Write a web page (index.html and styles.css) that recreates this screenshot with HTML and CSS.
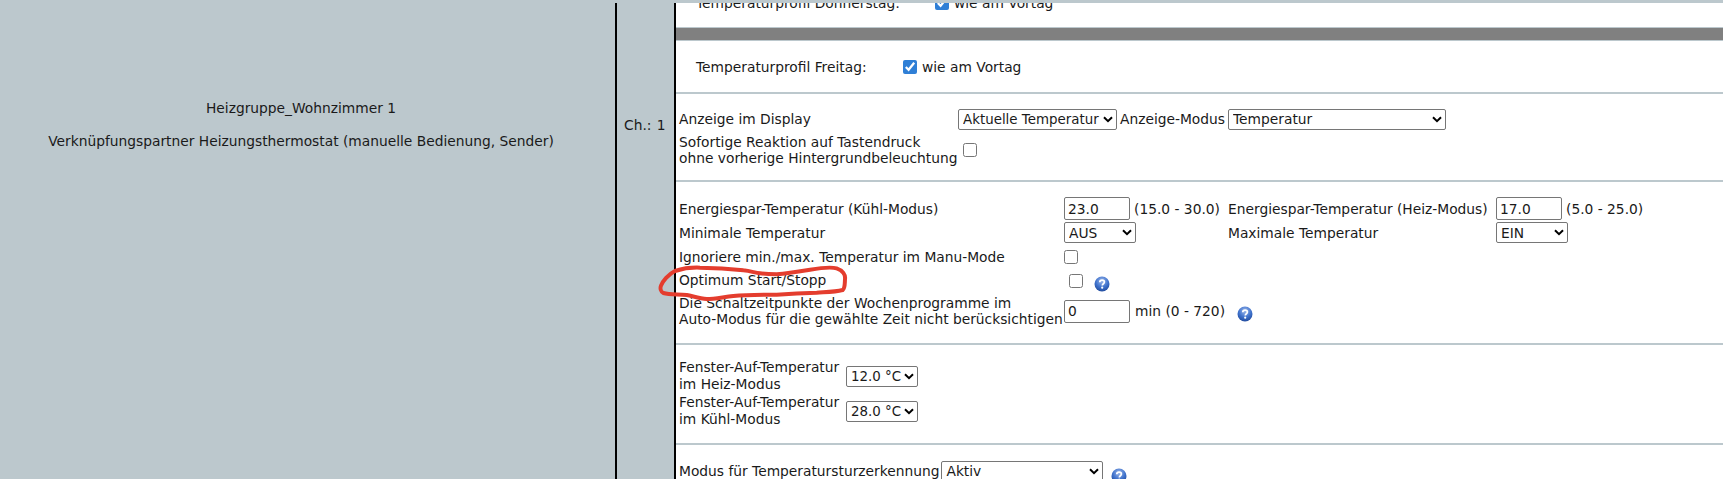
FILE: index.html
```html
<!DOCTYPE html>
<html lang="de">
<head>
<meta charset="utf-8">
<title>Heizgruppe_Wohnzimmer 1</title>
<link rel="stylesheet" href="styles.css">
</head>
<body>
<svg width="0" height="0" class="defs">
  <defs>
    <radialGradient id="helpfill" cx="50%" cy="30%" r="75%">
      <stop offset="0" stop-color="#9db8ea"/>
      <stop offset="0.55" stop-color="#3f72cc"/>
      <stop offset="1" stop-color="#1c4596"/>
    </radialGradient>
    <symbol id="help" viewBox="0 0 16 16">
      <circle cx="8" cy="8" r="7.5" fill="url(#helpfill)"/>
      <path d="M5.8 6.2c0-1.3 1-2 2.3-2s2.3.8 2.3 1.9c0 1.6-2.1 1.7-2.1 3.4" fill="none" stroke="#fff" stroke-width="1.7"/>
      <circle cx="8.2" cy="11.7" r="1.1" fill="#fff"/>
    </symbol>
  </defs>
</svg>
<div class="page">
  <div class="cell-name">
    <p>Heizgruppe_Wohnzimmer 1</p>
    <p>Verknüpfungspartner Heizungsthermostat (manuelle Bedienung, Sender)</p>
  </div>
  <div class="cell-ch">Ch.: 1</div>
  <div class="cell-main">
    <div class="clip-row">
      <span class="profile-label-long">Temperaturprofil Donnerstag:</span>
      <label class="check-label"><input type="checkbox" checked> wie am Vortag</label>
    </div>
    <div class="bar"></div>
    <div class="friday">
      <span class="profile-label">Temperaturprofil Freitag:</span>
      <label class="check-label"><input type="checkbox" checked> wie am Vortag</label>
    </div>
    <hr>
    <div class="display">
      <div class="display-row">
        <span class="lbl-display">Anzeige im Display</span>
        <select class="sel-display"><option>Aktuelle Temperatur</option></select>
        <span>Anzeige-Modus</span>
        <select class="sel-mode"><option>Temperatur</option></select>
      </div>
      <div class="display-row instant">
        <span class="lbl-display">Sofortige Reaktion auf Tastendruck<br>ohne vorherige Hintergrundbeleuchtung</span>
        <input type="checkbox">
      </div>
    </div>
    <hr>
    <div class="temps">
      <span>Energiespar-Temperatur (Kühl-Modus)</span>
      <input type="text" class="num" value="23.0">
      <span class="range">(15.0 - 30.0)</span>
      <span>Energiespar-Temperatur (Heiz-Modus)</span>
      <input type="text" class="num" value="17.0">
      <span class="range">(5.0 - 25.0)</span>

      <span>Minimale Temperatur</span>
      <select class="sel-short"><option>AUS</option></select>
      <span></span>
      <span>Maximale Temperatur</span>
      <select class="sel-short"><option>EIN</option></select>
      <span></span>

      <span>Ignoriere min./max. Temperatur im Manu-Mode</span>
      <input type="checkbox" class="cb-cell">
      <span class="wide"></span>

      <span>Optimum Start/Stopp</span>
      <span class="cb-help"><input type="checkbox"><svg class="help"><use href="#help"/></svg></span>
      <span class="wide"></span>

      <span class="two">Die Schaltzeitpunkte der Wochenprogramme im<br>Auto-Modus für die gewählte Zeit nicht berücksichtigen</span>
      <span class="val-help"><input type="text" class="num" value="0"><span>min (0 - 720)</span><svg class="help"><use href="#help"/></svg></span>
    </div>
    <hr>
    <div class="window">
      <span class="two">Fenster-Auf-Temperatur<br>im Heiz-Modus</span>
      <select class="sel-temp"><option>12.0 °C</option></select>
      <span class="two">Fenster-Auf-Temperatur<br>im Kühl-Modus</span>
      <select class="sel-temp"><option>28.0 °C</option></select>
    </div>
    <hr>
    <div class="drop">
      <span>Modus für Temperatursturzerkennung</span>
      <select class="sel-drop"><option>Aktiv</option></select>
      <svg class="help"><use href="#help"/></svg>
    </div>
    <svg class="mark" viewBox="0 0 600 150" fill="none">
      <path d="M75 48C100 40 125 37 150 38C195 38 240 41 280 46C300 48 315 53 330 55C350 58 365 58 380 58C415 55 450 49 480 44C510 39 545 36 560 40C578 46 587 60 585 72C584 90 585 100 578 105C555 111 530 111 500 113C460 114 420 116 380 119C335 119 290 119 250 123C220 126 195 132 170 132C150 130 130 124 110 120C85 117 60 120 40 114C32 110 30 100 33 92C38 78 55 58 75 48Z" stroke="#e43d2e" stroke-width="12" stroke-linejoin="round"/>
    </svg>
  </div>
</div>
</body>
</html>
```
FILE: styles.css
```css
html, body {
  margin: 0;
  padding: 0;
  height: 479px;
  overflow: hidden;
  background: #bcc8cd;
}
body {
  font-family: "DejaVu Sans", Verdana, sans-serif;
  font-size: 13.8px;
  color: #1a1a1a;
}
.defs { position: absolute; }
.page {
  display: grid;
  grid-template-columns: 615px 61px 1fr;
  height: 476px;
  margin-top: 3px;
  overflow: hidden;
}
.cell-name {
  text-align: center;
  padding-top: 97px;
  padding-right: 13px;
}
.cell-name p { margin: 0 0 17px; line-height: 16px; }
.cell-ch {
  border-left: 2px solid #000;
  border-right: 2px solid #000;
  padding: 114px 0 0 7px;
  line-height: 16px;
  white-space: nowrap;
  word-spacing: 1px;
}
.cell-main {
  position: relative;
  background: #fff;
}
input[type="checkbox"] {
  width: 14px;
  height: 14px;
  margin: 0;
  vertical-align: middle;
  accent-color: #2f7fd6;
}
.clip-row {
  height: 24px;
  margin-top: -12px;
  margin-bottom: 12px;
  padding-left: 20px;
  display: flex;
  align-items: center;
}
.profile-label { width: 207px; flex: none; }
.profile-label-long { width: 239px; flex: none; white-space: nowrap; }
.check-label { display: flex; align-items: center; gap: 5px; }
.bar {
  height: 12px;
  background: #808080;
  border-top: 1px solid #bcc8cd;
  border-bottom: 1px solid #bcc8cd;
}
.friday {
  display: flex;
  align-items: center;
  height: 51px;
  padding-left: 20px;
}
hr {
  border: 0;
  height: 2px;
  margin: 0;
  background: #bcc8cd;
}
select, input[type="text"] {
  font-family: inherit;
  font-size: 13.8px;
  color: #1a1a1a;
  background-color: #fff;
  border: 1px solid #767676;
  border-radius: 2px;
  margin: 0;
  box-sizing: border-box;
}
select {
  appearance: none;
  padding: 0 13px 0 4px;
  background-image: url("data:image/svg+xml,%3Csvg xmlns='http://www.w3.org/2000/svg' width='10' height='7' viewBox='0 0 10 7'%3E%3Cpath d='M1 1.2l4 4 4-4' fill='none' stroke='%23000' stroke-width='2'/%3E%3C/svg%3E");
  background-repeat: no-repeat;
  background-position: right 3px center;
}
.display { padding: 14px 0 0 3px; height: 86px; box-sizing: border-box; }
.display-row { display: flex; align-items: center; gap: 3px; height: 22px; }
.instant { height: 32px; margin-top: 4px; line-height: 16px; }
.instant input { margin-left: 5px; }
.lbl-display { width: 276px; flex: none; white-space: nowrap; }
select.sel-display { width: 159px; height: 21px; font-size: 13.4px; }
.sel-mode { width: 218px; height: 21px; }
.temps {
  display: grid;
  grid-template-columns: 385px 68px 96px 268px 68px 1fr;
  padding: 15px 0 0 3px;
  height: 161px;
  box-sizing: border-box;
  grid-auto-rows: min-content;
  align-items: center;
  line-height: 16px;
}
.temps > .wide { grid-column: span 4; }
.temps > .two { height: 32px; white-space: nowrap; }
.num { width: 66px; height: 23px; padding: 0 3px; }
.sel-short { width: 72px; height: 21px; margin: 2px 0; }
.cb-cell { margin-left: 5px; }
.temps > span { min-height: 23px; display: flex; align-items: center; }
.temps > .range { padding-left: 2px; white-space: nowrap; }
.temps > .two { display: block; margin-top: 3px; }
.cb-help { padding-left: 5px; padding-top: 1px; }
.help { width: 16px; height: 16px; flex: none; }
.cb-help .help { margin-left: 11px; margin-top: 7px; }
.temps > .val-help {
  grid-column: span 5;
  gap: 5px;
  margin-top: 3px;
}
.val-help .help { margin-left: 7px; margin-top: 6px; }
.window {
  display: grid;
  grid-template-columns: 167px auto;
  justify-content: start;
  align-content: start;
  align-items: center;
  padding: 14px 0 0 3px;
  height: 98px;
  box-sizing: border-box;
  row-gap: 1px;
  line-height: 17px;
}
select.sel-temp { width: 72px; height: 21px; font-size: 13.4px; padding-right: 12px; }
.drop {
  display: flex;
  align-items: center;
  padding: 13px 0 0 3px;
  gap: 2px;
}
.sel-drop { width: 162px; height: 21px; margin-right: 6px; }
.drop .help { margin-top: 10px; }
.mark {
  position: absolute;
  left: -26px;
  top: 252px;
  width: 200px;
  height: 50px;
}
```
